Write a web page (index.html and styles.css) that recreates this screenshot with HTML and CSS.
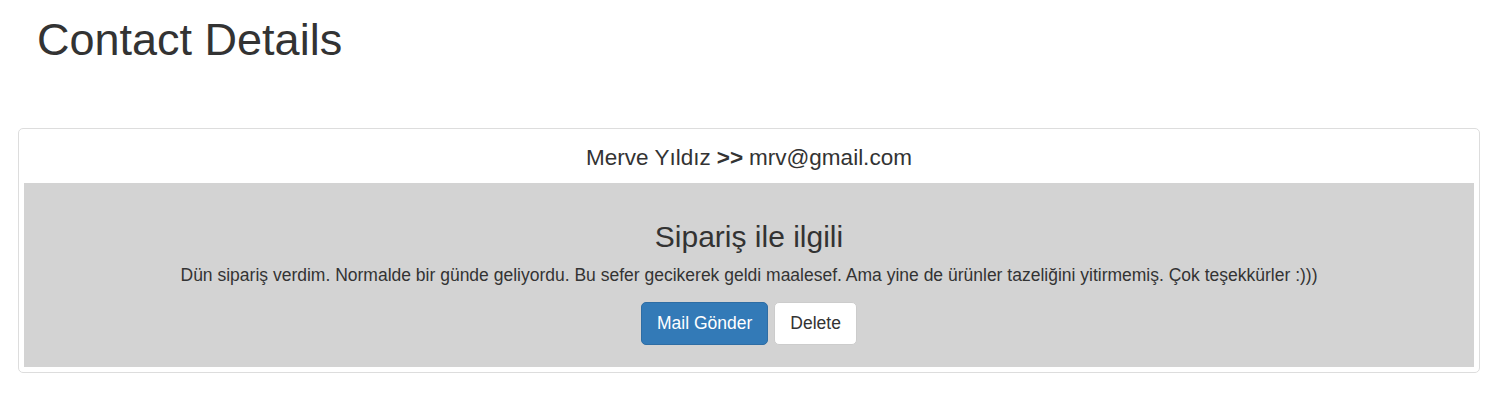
FILE: index.html
```html
<!DOCTYPE html>
<html>
<head>
<meta charset="utf-8">
<link rel="stylesheet" href="styles.css">
</head>
<body>
<div class="container">
  <h1 class="page-title">Contact Details</h1>
  <div class="panel">
    <div class="panel-heading">Merve Yıldız <b>&gt;&gt;</b> mrv@gmail.com</div>
    <div class="message">
      <h3 class="subject">Sipariş ile ilgili</h3>
      <p class="body-text">Dün sipariş verdim. Normalde bir günde geliyordu. Bu sefer gecikerek geldi maalesef. Ama yine de ürünler tazeliğini yitirmemiş. Çok teşekkürler :)))</p>
      <div class="actions">
        <button class="btn btn-primary">Mail Gönder</button>
        <button class="btn btn-default">Delete</button>
      </div>
    </div>
  </div>
</div>
</body>
</html>
```

FILE: styles.css
```css
html, body {
  margin: 0;
  padding: 0;
  background: #fff;
}
body {
  font-family: "Liberation Sans", Arial, sans-serif;
  font-size: 17.5px;
  line-height: 1.42857;
  color: #333;
}
.container {
  padding: 0 18px;
}
.page-title {
  font-size: 45px;
  font-weight: 500;
  line-height: 1.1;
  margin: 15px 0 0 0;
  padding-left: 19px;
  height: 113px;
}
.panel {
  border: 1px solid #ddd;
  border-radius: 5px;
  padding: 0 5px 5px 5px;
}
.panel-heading {
  height: 54px;
  box-sizing: border-box;
  padding-top: 4px;
  display: flex;
  align-items: center;
  justify-content: center;
  font-size: 22.5px;
}
.panel-heading b {
  margin: 0 6px;
}
.message {
  background: #d3d3d3;
  height: 184px;
  box-sizing: border-box;
  padding-top: 37px;
  text-align: center;
}
.subject {
  font-size: 30px;
  font-weight: 500;
  line-height: 1.1;
  margin: 0 0 10px 0;
}
.body-text {
  margin: 0 0 14px 0;
}
.actions {
  display: flex;
  justify-content: center;
  gap: 6px;
}
.btn {
  font-family: inherit;
  font-size: 17.5px;
  line-height: 1.42857;
  padding: 8px 15px;
  border-radius: 5px;
  border: 1px solid transparent;
  cursor: pointer;
}
.btn-primary {
  background: #337ab7;
  border-color: #2e6da4;
  color: #fff;
}
.btn-default {
  background: #fff;
  border-color: #ccc;
  color: #333;
}
```
